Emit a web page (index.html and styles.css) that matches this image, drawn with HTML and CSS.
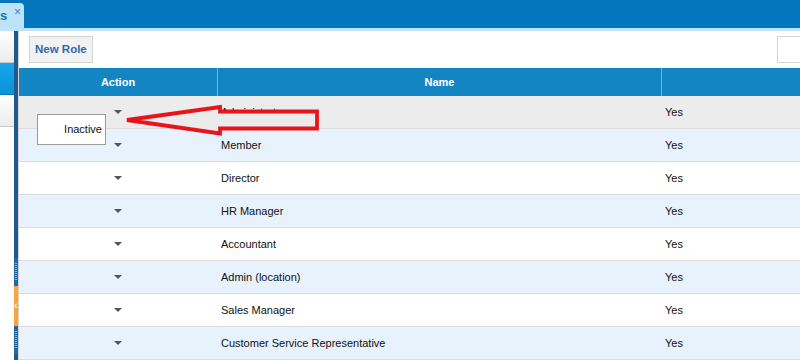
FILE: index.html
```html
<!DOCTYPE html>
<html lang="en">
<head>
    <meta charset="UTF-8">
    <title>Roles</title>
    <link rel="stylesheet" href="styles.css">
</head>
<body>
    <div class="topbar">
        <div class="tab"><span class="tab-title">s</span><span class="tab-close">×</span></div>
    </div>
    <div class="app">
        <div class="sidebar">
            <div class="side-btn"></div>
            <div class="side-btn active"></div>
            <div class="side-btn"></div>
        </div>
        <div class="splitter">
            <div class="split-fill"></div>
            <div class="grip"></div>
            <div class="collapse">‹</div>
            <div class="grip"></div>
        </div>
        <div class="main">
            <div class="toolbar">
                <button class="new-role">New Role</button>
                <input class="search" type="text">
            </div>
            <table class="grid">
                <thead>
                    <tr>
                        <th class="col-action">Action</th>
                        <th class="col-name">Name</th>
                        <th class="col-active"></th>
                    </tr>
                </thead>
                <tbody>
                    <tr class="hover"><td class="act"><span class="caret"></span></td><td>Administrator</td><td>Yes</td></tr>
                    <tr class="alt"><td class="act"><span class="caret"></span></td><td>Member</td><td>Yes</td></tr>
                    <tr><td class="act"><span class="caret"></span></td><td>Director</td><td>Yes</td></tr>
                    <tr class="alt"><td class="act"><span class="caret"></span></td><td>HR Manager</td><td>Yes</td></tr>
                    <tr><td class="act"><span class="caret"></span></td><td>Accountant</td><td>Yes</td></tr>
                    <tr class="alt"><td class="act"><span class="caret"></span></td><td>Admin (location)</td><td>Yes</td></tr>
                    <tr><td class="act"><span class="caret"></span></td><td>Sales Manager</td><td>Yes</td></tr>
                    <tr class="alt"><td class="act"><span class="caret"></span></td><td>Customer Service Representative</td><td>Yes</td></tr>
                </tbody>
            </table>
        </div>
    </div>

    <div class="menu">Inactive</div>

    <svg class="callout" width="200" height="40" viewBox="0 0 200 40">
        <polygon points="3,20 96,7 96,11.5 193,11.5 193,28.5 96,28.5 96,33.5" fill="#ebebeb" stroke="#e8141c" stroke-width="3.8" stroke-linejoin="miter"/>
    </svg>
</body>
</html>
```

FILE: styles.css
```css
body {
    margin: 0;
    width: 800px;
    height: 360px;
    overflow: hidden;
    font-family: 'Liberation Sans', Arial, sans-serif;
    background-color: #fff;
    color: #111;
}

.topbar {
    height: 28px;
    background-color: #0376bd;
    border-bottom: 3px solid #bfe4fa;
    display: flex;
    align-items: flex-end;
}

.tab {
    width: 24px;
    height: 25px;
    background-color: #bde3f8;
    border-top-right-radius: 4px;
    position: relative;
}

.tab-title {
    position: absolute;
    left: 0;
    top: 6px;
    font-size: 13px;
    font-weight: bold;
    color: #1d6fae;
    line-height: 14px;
}

.tab-close {
    position: absolute;
    left: 14px;
    top: 3px;
    font-size: 12px;
    color: #3a86c8;
    line-height: 12px;
}

.app {
    display: flex;
    height: 329px;
}

.sidebar {
    width: 14px;
    flex-shrink: 0;
    display: flex;
    flex-direction: column;
}

.side-btn {
    height: 31px;
    background: linear-gradient(#ffffff, #ececec);
    border-bottom: 1px solid #c9c9c9;
}

.side-btn.active {
    background: linear-gradient(#16a6ec, #0a93d8);
    border-bottom: 1px solid #0a7fc0;
}

.splitter {
    width: 4px;
    flex-shrink: 0;
    display: flex;
    flex-direction: column;
    background-color: #25588a;
    border-right: 1px solid #d4d4d4;
}

.split-fill {
    height: 227px;
    flex-shrink: 0;
}

.grip {
    height: 28px;
    flex-shrink: 0;
    background-color: #1f6aa5;
    background-image: repeating-linear-gradient(#7fb6e4 0 1px, transparent 1px 2px);
    background-size: 2px 18px;
    background-position: center;
    background-repeat: no-repeat;
}

.collapse {
    height: 40px;
    flex-shrink: 0;
    background-color: #f9a53a;
    color: #fff;
    font-size: 10px;
    font-weight: bold;
    line-height: 40px;
    text-align: center;
    overflow: hidden;
}

.main {
    flex-grow: 1;
    min-width: 0;
    display: flex;
    flex-direction: column;
}

.toolbar {
    height: 37px;
    flex-shrink: 0;
    display: flex;
    align-items: center;
    justify-content: space-between;
    padding-left: 10px;
}

.new-role {
    height: 27px;
    padding: 0 5px;
    background-color: #f2f2f2;
    border: 1px solid #d4d4d4;
    color: #2e6aa8;
    font-family: 'Liberation Sans', Arial, sans-serif;
    font-size: 11.5px;
    font-weight: bold;
    margin-top: -1px;
}

.search {
    width: 20px;
    height: 23px;
    border: 1px solid #d4d4d4;
    border-right: none;
    padding: 1px;
    margin-top: -1px;
}

.grid {
    border-collapse: collapse;
    width: 100%;
    table-layout: fixed;
    font-size: 11px;
}

.grid th {
    height: 28px;
    padding: 0;
    background-color: #1385c3;
    color: #fff;
    font-size: 11px;
    font-weight: bold;
    border-left: 1px solid #6fb6e0;
}

.grid th:first-child {
    border-left: none;
}

.col-action {
    width: 198px;
}

.col-name {
    width: 443px;
}

.grid td {
    height: 32px;
    padding: 0 0 0 3px;
    border-bottom: 1px solid #dcdcdc;
    border-left: 1px solid transparent;
}

.grid td:first-child {
    border-left: none;
}

.grid tr.alt td {
    background-color: #e8f2fd;
}

.grid tr.hover td {
    background-color: #ececec;
}

.grid td.act {
    text-align: center;
    padding: 0;
}

.caret {
    display: inline-block;
    width: 0;
    height: 0;
    border-left: 4px solid transparent;
    border-right: 4px solid transparent;
    border-top: 4px solid #555;
    vertical-align: middle;
    margin-bottom: 3px;
}

.menu {
    position: absolute;
    left: 37px;
    top: 114px;
    width: 64px;
    height: 29px;
    padding-right: 3px;
    background-color: #fff;
    border: 1px solid #9a9a9a;
    font-size: 11px;
    line-height: 29px;
    text-align: right;
}

.callout {
    position: absolute;
    left: 124px;
    top: 100px;
}
```
